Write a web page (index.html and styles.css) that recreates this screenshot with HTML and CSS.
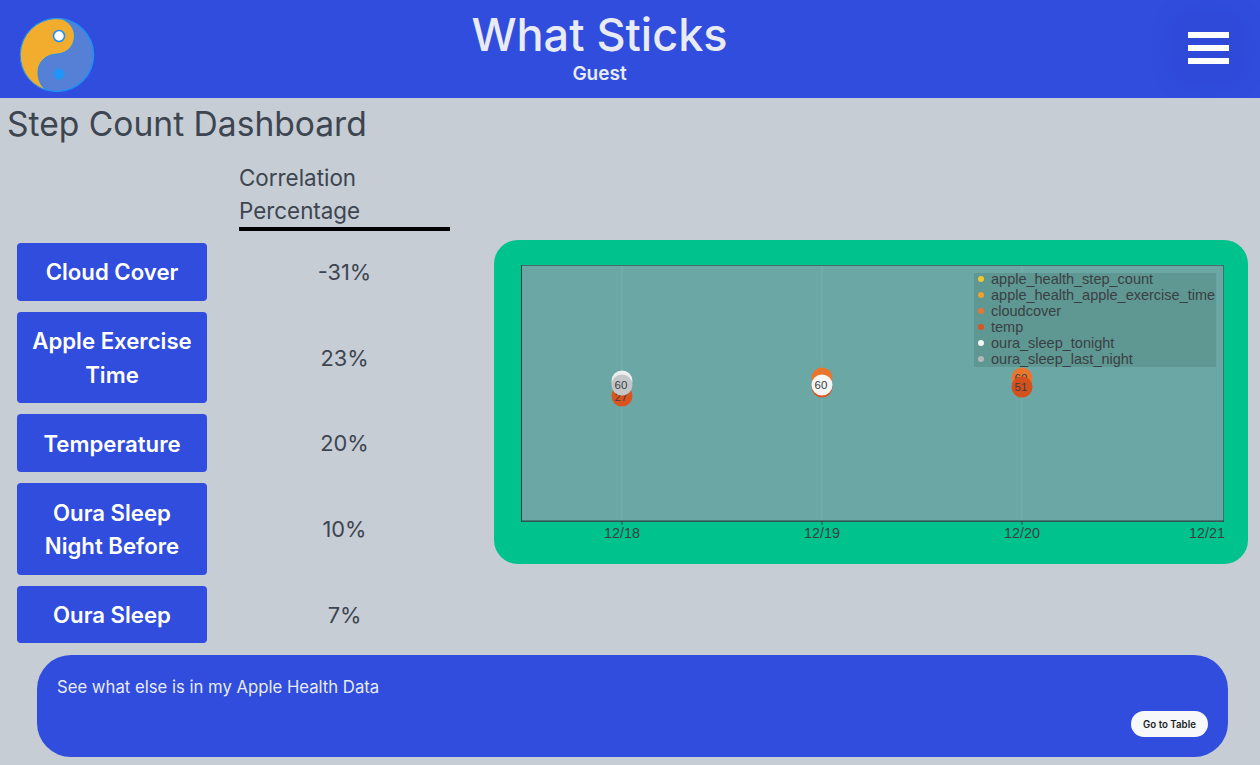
FILE: index.html
```html
<!DOCTYPE html>
<html lang="en">

<head>
	<meta charset="utf-8" />
	<title>What Sticks</title>
	<link rel="stylesheet" href="styles.css">
</head>

<body>
	<header class="topbar">
		<div class="logo-box">
			<svg class="logo" width="78" height="78" viewBox="18 16 78 78">
				<circle cx="57" cy="55" r="36.5" fill="#5580d6" stroke="#1e90f5" stroke-width="1.5" />
				<path d="M62 19 C70 22 74.5 29 74.5 36 C74.5 46 67 53 58 54 C46 54 38 62 38 72 C38 80 41 86 46 90 A36.5 36.5 0 0 1 62 19 Z" fill="#f3ad2e" stroke="#1e90f5" stroke-width="1" />
				<circle cx="59" cy="36" r="5.5" fill="#fff" stroke="#1e90f5" stroke-width="1.6" />
				<circle cx="59" cy="74" r="5.5" fill="#2196f8" stroke="#3b8ae6" stroke-width="1" />
			</svg>
		</div>
		<div class="brand">
			<h1>What Sticks</h1>
			<div class="user">Guest</div>
		</div>
		<div class="menu-box">
			<button class="menu-btn" aria-label="menu">
				<span></span>
				<span></span>
				<span></span>
			</button>
		</div>
	</header>

	<h2 class="page-title">Step Count Dashboard</h2>

	<main class="dash">
		<section class="stats">
			<div class="stats-head">Correlation Percentage</div>
			<button class="stat-btn">Cloud Cover</button>
			<div class="stat-val">-31%</div>
			<button class="stat-btn">Apple Exercise Time</button>
			<div class="stat-val">23%</div>
			<button class="stat-btn">Temperature</button>
			<div class="stat-val">20%</div>
			<button class="stat-btn">Oura Sleep Night Before</button>
			<div class="stat-val">10%</div>
			<button class="stat-btn">Oura Sleep</button>
			<div class="stat-val">7%</div>
		</section>

		<section class="chart-card">
			<svg class="chart" width="754" height="324" viewBox="0 0 754 324">
				<rect x="27.5" y="25.5" width="702" height="256" fill="#6ba8a5" stroke="#3d6f6c" stroke-width="1" />
				<line x1="128" y1="26" x2="128" y2="281" class="grid" />
				<line x1="328" y1="26" x2="328" y2="281" class="grid" />
				<line x1="528" y1="26" x2="528" y2="281" class="grid" />
				<line x1="27" y1="281" x2="730" y2="281" class="axis" />
				<line x1="27.5" y1="25" x2="27.5" y2="282" class="axis" />

				<line x1="128" y1="281" x2="128" y2="285" class="axis" />
				<line x1="328" y1="281" x2="328" y2="285" class="axis" />
				<line x1="528" y1="281" x2="528" y2="285" class="axis" />
				<text x="128" y="298" class="tick">12/18</text>
				<text x="328" y="298" class="tick">12/19</text>
				<text x="528" y="298" class="tick">12/20</text>
				<text x="731" y="298" class="tick tick-end">12/21</text>

				<!-- 12/18 -->
				<circle cx="128" cy="156" r="10.5" fill="#d9541e" />
				<text x="127" y="161" class="val">27</text>
				<circle cx="128" cy="141" r="10.5" fill="#eeeeee" />
				<circle cx="128" cy="145" r="10.5" fill="#c4c6c8" />
				<text x="127" y="149" class="val">60</text>

				<!-- 12/19 -->
				<circle cx="328" cy="138" r="10.5" fill="#e8762e" />
				<circle cx="328" cy="147" r="10.5" fill="#d9541e" />
				<circle cx="328" cy="145" r="10.5" fill="#f4f5f5" />
				<text x="327" y="149" class="val">60</text>

				<!-- 12/20 -->
				<circle cx="528" cy="138" r="10.5" fill="#e8762e" />
				<text x="527" y="142" class="val">60</text>
				<circle cx="528" cy="147" r="10.5" fill="#d4501c" />
				<text x="527" y="151" class="val">51</text>

				<!-- legend -->
				<rect x="480" y="33" width="242" height="94" fill="#5f9792" />
				<circle cx="487" cy="39" r="3" fill="#f2c72e" />
				<text x="497" y="44" class="legend">apple_health_step_count</text>
				<circle cx="487" cy="55" r="3" fill="#f0a02c" />
				<text x="497" y="60" class="legend">apple_health_apple_exercise_time</text>
				<circle cx="487" cy="71" r="3" fill="#e8762e" />
				<text x="497" y="76" class="legend">cloudcover</text>
				<circle cx="487" cy="87" r="3" fill="#d9541e" />
				<text x="497" y="92" class="legend">temp</text>
				<circle cx="487" cy="103" r="3" fill="#f4f5f5" />
				<text x="497" y="108" class="legend">oura_sleep_tonight</text>
				<circle cx="487" cy="119" r="3" fill="#b4b8ba" />
				<text x="497" y="124" class="legend">oura_sleep_last_night</text>
			</svg>
		</section>
	</main>

	<footer class="more">
		<p>See what else is in my Apple Health Data</p>
		<button class="table-btn">Go to Table</button>
	</footer>
</body>

</html>
```

FILE: styles.css
```css
* {
	margin: 0;
	padding: 0;
	box-sizing: border-box;
}

html,
body {
	height: 100%;
	overflow: hidden;
}

body {
	background-color: #c6cdd5;
	color: #3d4550;
	font-family: "Inter", "Liberation Sans", sans-serif;
}

button {
	font-family: inherit;
	border: none;
	cursor: pointer;
}

/* top bar */
.topbar {
	display: flex;
	height: 98px;
	background-color: #304ddd;
	overflow: hidden;
}

.logo-box {
	width: 95px;
	padding: 16px 0 0 18px;
}

.logo {
	display: block;
}

.brand {
	flex: 1;
	padding-top: 8px;
	text-align: center;
	color: #e8ebf4;
}

.brand h1 {
	font-size: 45px;
	font-weight: 500;
	line-height: 54px;
}

.user {
	margin-top: 1px;
	font-size: 19px;
	font-weight: 600;
	line-height: 22px;
}

.menu-box {
	display: flex;
	justify-content: flex-end;
	width: 156px;
	padding: 12px 16px 0 0;
}

.menu-btn {
	display: flex;
	flex-direction: column;
	align-items: center;
	gap: 7px;
	width: 72px;
	height: 72px;
	padding-top: 20px;
	background-color: #2f4ad8;
	border-radius: 24px;
	box-shadow: 0 0 16px 2px rgba(46, 73, 214, .8);
}

.menu-btn span {
	display: block;
	width: 41px;
	height: 6px;
	background-color: #fff;
}

/* page title */
.page-title {
	height: 52px;
	padding: 6px 0 0 7px;
	font-size: 33.6px;
	font-weight: 400;
	line-height: 40px;
}

.dash {
	display: flex;
	gap: 44px;
	padding-left: 17px;
}

/* correlation table */
.stats {
	display: grid;
	grid-template-columns: 190px 211px;
	column-gap: 32px;
	row-gap: 11px;
	padding-top: 10px;
}

.stats-head {
	grid-column: 2;
	margin-bottom: 1px;
	padding-top: 1px;
	border-bottom: 4px solid #000;
	font-size: 22.4px;
	line-height: 33px;
}

.stat-btn {
	grid-column: 1;
	padding: 12.4px 10px 12px;
	background-color: #304ddd;
	border-radius: 4px;
	color: #fff;
	font-size: 22.2px;
	font-weight: 600;
	line-height: 33.5px;
}

.stat-val {
	display: flex;
	align-items: center;
	justify-content: center;
	font-size: 21.8px;
}

/* chart */
.chart-card {
	width: 754px;
	height: 324px;
	margin-top: 90px;
	background-color: #00c28c;
	border-radius: 24px;
	overflow: hidden;
}

.chart {
	display: block;
}

.chart text {
	font-family: "Liberation Sans", sans-serif;
	fill: #3a3f44;
}

.grid {
	stroke: #78b0ad;
	stroke-width: 1;
}

.axis {
	stroke: #23433f;
	stroke-width: 1;
}

.tick {
	font-size: 14.4px;
	text-anchor: middle;
}

.tick-end {
	text-anchor: end;
}

.val {
	font-size: 11.5px;
	text-anchor: middle;
}

.legend {
	font-size: 14.5px;
}

/* bottom panel */
.more {
	display: flex;
	flex-direction: column;
	align-items: flex-end;
	gap: 12px;
	width: 1191px;
	height: 102px;
	margin: 12px 0 0 37px;
	padding: 20px;
	background-color: #304ddd;
	border-radius: 34px;
}

.more p {
	align-self: flex-start;
	color: #e8ebf4;
	font-size: 16.7px;
	line-height: 24px;
}

.table-btn {
	width: 77px;
	height: 27px;
	background-color: #f7f8fa;
	border-radius: 14px;
	color: #1a1d24;
	font-size: 9.7px;
	font-weight: 600;
}
```
